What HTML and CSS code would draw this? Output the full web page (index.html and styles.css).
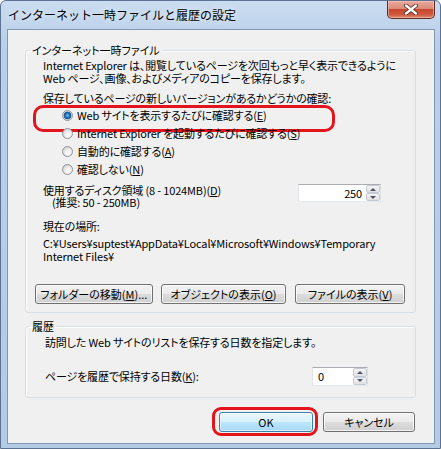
FILE: index.html
```html
<!DOCTYPE html>
<html lang="ja">
<head>
  <meta charset="UTF-8" />
  <title>インターネット一時ファイルと履歴の設定</title>
  <link rel="stylesheet" href="styles.css">
</head>
<body>
  <div class="window">
    <div class="titlebar">
      <span class="title">インターネット一時ファイルと履歴の設定</span>
      <span class="close">
        <svg width="14" height="11" viewBox="0 0 14 11">
          <path d="M2 1.5 L12 9.5 M12 1.5 L2 9.5" stroke="#4a2622" stroke-width="4" stroke-linecap="round" />
          <path d="M2 1.5 L12 9.5 M12 1.5 L2 9.5" stroke="#ffffff" stroke-width="2.4" stroke-linecap="round" />
        </svg>
      </span>
    </div>

    <div class="client">
      <fieldset class="group">
        <legend>インターネット一時ファイル</legend>
        <div class="group-body">
          <p class="desc">Internet Explorer は、閲覧しているページを次回もっと早く表示できるように<br>Web ページ、画像、およびメディアのコピーを保存します。</p>
          <p class="question">保存しているページの新しいバージョンがあるかどうかの確認:</p>
          <ul class="radios">
            <li class="radio-row marked"><span class="radio checked"></span>Web サイトを表示するたびに確認する(<u>E</u>)</li>
            <li class="radio-row"><span class="radio"></span>Internet Explorer を起動するたびに確認する(<u>S</u>)</li>
            <li class="radio-row"><span class="radio"></span>自動的に確認する(<u>A</u>)</li>
            <li class="radio-row"><span class="radio"></span>確認しない(<u>N</u>)</li>
          </ul>
          <div class="disk-row">
            <div class="disk-label">使用するディスク領域 (8 - 1024MB)(<u>D</u>)<br><span class="indent">(推奨: 50 - 250MB)</span></div>
            <div class="spin disk-spin">
              <span class="spin-value">250</span>
              <span class="spin-buttons"><span class="spin-up"></span><span class="spin-down"></span></span>
            </div>
          </div>
          <p class="location-label">現在の場所:</p>
          <p class="path">C:¥Users¥suptest¥AppData¥Local¥Microsoft¥Windows¥Temporary<br>Internet Files¥</p>
          <div class="button-row">
            <button class="btn move-btn">フォルダーの移動(<u>M</u>)...</button>
            <button class="btn objects-btn">オブジェクトの表示(<u>O</u>)</button>
            <button class="btn files-btn">ファイルの表示(<u>V</u>)</button>
          </div>
        </div>
      </fieldset>

      <fieldset class="group history">
        <legend>履歴</legend>
        <div class="group-body">
          <p class="desc">訪問した Web サイトのリストを保存する日数を指定します。</p>
          <div class="days-row">
            <span>ページを履歴で保持する日数(<u>K</u>):</span>
            <div class="spin days-spin">
              <span class="spin-value left">0</span>
              <span class="spin-buttons"><span class="spin-up"></span><span class="spin-down"></span></span>
            </div>
          </div>
        </div>
      </fieldset>

      <div class="dialog-buttons">
        <button class="btn default ok-btn">OK</button>
        <button class="btn cancel-btn">キャンセル</button>
      </div>
    </div>
  </div>
</body>
</html>
```

FILE: styles.css
```css
* {
  margin: 0;
  padding: 0;
  box-sizing: border-box;
}
body {
  margin: 0;
  font-family: "Noto Sans CJK JP", "Noto Sans", sans-serif;
  font-size: 11px;
  color: #000;
  background: #fff;
  overflow: hidden;
}
.window {
  width: 441px;
  height: 449px;
  border: 1px solid #5d7190;
  border-radius: 6px 6px 0 0;
  background: linear-gradient(#cadcf0, #b9d0ea 40px, #b4cbe6);
  padding: 0 5px 4px 6px;
  display: flex;
  flex-direction: column;
  overflow: hidden;
}
.titlebar {
  height: 28px;
  flex: none;
  display: flex;
  align-items: flex-start;
}
.title {
  margin: 7px 0 0 1px;
  font-size: 12px;
  line-height: 14px;
  color: #000;
  text-shadow: 0 0 6px rgba(255,255,255,0.9);
}
.close {
  margin-left: auto;
  width: 48px;
  height: 18px;
  display: flex;
  align-items: center;
  justify-content: center;
  border: 1px solid #5a2a24;
  border-top: none;
  border-radius: 0 0 5px 5px;
  background: linear-gradient(#e9a99b 0%, #dc8b79 45%, #c8472f 50%, #cf5a40 80%, #e08a70 100%);
  box-shadow: inset 0 0 0 1px rgba(255,210,200,0.5);
}
.client {
  flex: 1;
  border: 1px solid #8196b2;
  background: #f0f0f0;
  display: flex;
  flex-direction: column;
  min-height: 0;
}
.group {
  margin: 13px 18px 0 17px;
  padding: 0;
  border: 1px solid #d5dfe5;
  border-radius: 3px;
  box-shadow: inset 1px 1px 0 #fff;
  min-width: 0;
}
.group legend {
  margin-left: 4px;
  padding: 0 2px;
  line-height: 14px;
  font-feature-settings: "palt";
}
.group-body {
  padding: 2px 10px 8px 17px;
  line-height: 13px;
  white-space: nowrap;
  letter-spacing: -0.15px;
  font-feature-settings: "palt";
}
.history {
  margin-top: 6px;
}
.history .group-body {
  padding: 3px 10px 11px 19px;
}
.question {
  margin-top: 7px;
}
.radios {
  list-style: none;
  margin-top: 1px;
}
.radio-row {
  position: relative;
  height: 18px;
  display: flex;
  align-items: center;
}
.radio-row.marked::before {
  content: "";
  position: absolute;
  left: -10px;
  top: -1px;
  width: 296px;
  height: 21px;
  border: 3px solid #e3141c;
  border-radius: 10px;
}
.radio {
  width: 11px;
  height: 11px;
  margin: 0 4px 0 19px;
  border: 1px solid #8f9397;
  border-radius: 50%;
  background: radial-gradient(circle at 60% 65%, #fefefe 0, #f0f0f0 3px, #d4d4d4 6px);
}
.radio.checked {
  background: radial-gradient(circle at 50% 50%, #7cc0f0 0, #2a78c2 2px, #16508c 3.5px, #d8e2ea 4.2px, #f4f4f4 6px);
}
.disk-row {
  margin-top: 6px;
  display: flex;
  justify-content: space-between;
  align-items: flex-start;
  line-height: 12px;
}
.indent {
  padding-left: 9px;
}
.spin {
  display: flex;
  height: 18px;
  background: #fff;
  border: 1px solid;
  border-color: #abadb3 #dbdfe6 #e3e9ef #e2e3ea;
}
.disk-spin {
  width: 83px;
  margin-right: 24px;
}
.days-spin {
  width: 56px;
  height: 19px;
  margin-right: 37px;
}
.spin-value {
  flex: 1;
  text-align: right;
  padding-right: 3px;
  line-height: 16px;
  font-feature-settings: normal;
}
.spin-value.left {
  text-align: left;
  padding-left: 5px;
}
.spin-buttons {
  width: 14px;
  display: flex;
  flex-direction: column;
  margin: 0 0 0 1px;
}
.spin-up, .spin-down {
  flex: 1;
  display: flex;
  align-items: center;
  justify-content: center;
  border: 1px solid #c5cbd4;
  border-radius: 2px;
  background: linear-gradient(#f5f5f5, #e0e0e0);
}
.spin-up::after {
  content: "";
  border: 3px solid transparent;
  border-top: none;
  border-bottom: 3px solid #48556b;
}
.spin-down::after {
  content: "";
  border: 3px solid transparent;
  border-bottom: none;
  border-top: 3px solid #48556b;
}
.location-label {
  margin-top: 12px;
}
.path {
  margin-top: 4px;
}
.button-row {
  display: flex;
  margin: 21px 0 0 -8px;
}
.btn {
  height: 20px;
  font-family: inherit;
  font-size: 11px;
  line-height: 18px;
  color: #000;
  text-align: center;
  white-space: nowrap;
  border: 1px solid #707070;
  border-radius: 3px;
  background: linear-gradient(#f2f2f2 0%, #ebebeb 50%, #dddddd 50%, #cfcfcf 100%);
  box-shadow: inset 0 0 0 1px rgba(255,255,255,0.75);
  font-feature-settings: "palt";
}
.move-btn {
  width: 119px;
}
.objects-btn {
  width: 127px;
  margin-left: 8px;
}
.files-btn {
  width: 111px;
  margin-left: 9px;
}
.days-row {
  margin-top: 18px;
  display: flex;
  justify-content: space-between;
  align-items: center;
}
.dialog-buttons {
  display: flex;
  justify-content: flex-end;
  margin: 14px 19px 0 0;
  gap: 10px;
}
.ok-btn {
  position: relative;
  width: 94px;
}
.cancel-btn {
  width: 92px;
}
.btn.default {
  border-color: #3c7fb1;
  background: linear-gradient(#eaf6fd 0%, #d9f0fc 50%, #bee6fd 50%, #a7d9f5 100%);
  box-shadow: inset 0 0 0 1px rgba(255,255,255,0.6);
}
.ok-btn::before {
  content: "";
  position: absolute;
  left: -8px;
  top: -6px;
  right: -6px;
  bottom: -5px;
  border: 3px solid #e3141c;
  border-radius: 9px;
}
```
